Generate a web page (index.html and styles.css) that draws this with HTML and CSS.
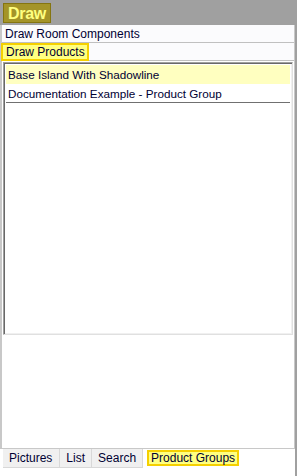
FILE: index.html
```html
<!DOCTYPE html>
<html>
  <head>
    <link rel="stylesheet" href="styles.css">
    <title>Draw</title>
  </head>
  <body>
    <div id="content">
        <div class="head">
            <span class="title">Draw</span>
        </div>
        <div class="panel">
            <div class="row">Draw Room Components</div>
            <div class="row"><span class="hl">Draw Products</span></div>
            <div class="listbox">
                <div class="item sel">Base Island With Shadowline</div>
                <div class="item last">Documentation Example - Product Group</div>
            </div>
        </div>
        <div class="tabs">
            <span class="tab">Pictures</span>
            <span class="tab">List</span>
            <span class="tab">Search</span>
            <span class="tab on">Product Groups</span>
        </div>
    </div>
  </body>
</html>
```

FILE: styles.css
```css
* {
    font-family: "Liberation Sans", Arial, sans-serif;
    box-sizing: border-box;
}

body {
    margin: 0;
    background-color: white;
    font-size: 12px;
    color: #000;
}

#content {
    width: 297px;
    height: 476px;
    display: flex;
    flex-direction: column;
    border-right: 2px solid #a0a0a0;
}

.head {
    height: 25px;
    background-color: #a0a0a0;
    padding: 3px 0 0 3px;
}

.title {
    display: inline-block;
    height: 20px;
    width: 48px;
    padding: 0 0 0 4px;
    font-size: 16px;
    letter-spacing: -0.3px;
    line-height: 19px;
    font-weight: bold;
    color: #ffff80;
    background-color: #a49428;
    border: 1px solid #857510;
}

.panel {
    flex: 1;
    border-left: 2px solid #c8c8c8;
    border-right: 1px solid #c8c8c8;
    border-bottom: 1px solid #c8c8c8;
    display: flex;
    flex-direction: column;
}

.row {
    height: 18px;
    line-height: 19px;
    padding-left: 3px;
    background-color: #fbfbfd;
    border-bottom: 1px solid #c0c0c0;
    font-size: 12px;
    color: #000033;
}

.row .hl {
    display: inline-block;
    margin-left: -4px;
    padding: 0 2px 0 3px;
    height: 18px;
    background-color: #ffff80;
    border: 2px solid #f5d000;
    line-height: 15px;
}

.listbox {
    margin: 1px 1px 0 1px;
    height: 273px;
    border: 1px solid #a0a0a0;
    border-right-color: #e0e0e0;
    border-bottom-color: #e0e0e0;
    box-shadow: inset 1px 1px 0 #696969, inset -1px -1px 0 #f0f0f0;
    padding: 2px;
}

.item {
    height: 19px;
    line-height: 20px;
    padding-left: 2px;
    font-size: 11.7px;
    color: #000033;
}

.sel {
    background-color: #ffffc0;
}

.last {
    border-bottom: 1px solid #707070;
}

.tabs {
    height: 27px;
    display: flex;
    align-items: flex-start;
    padding: 0 0 0 3px;
}

.tab {
    height: 19px;
    line-height: 19px;
    padding: 0 6px;
    background-color: #f0f0f0;
    border-right: 1px solid #d8d8d8;
    border-bottom: 1px solid #d8d8d8;
    font-size: 12px;
    color: #000033;
}

.tab:first-child {
    padding: 0 7px 0 6px;
}

.tab.on {
    margin: 1px 0 0 4px;
    padding: 0 2px;
    height: 16px;
    line-height: 13px;
    background-color: #ffff80;
    border: 2px solid #f5d000;
}
```
